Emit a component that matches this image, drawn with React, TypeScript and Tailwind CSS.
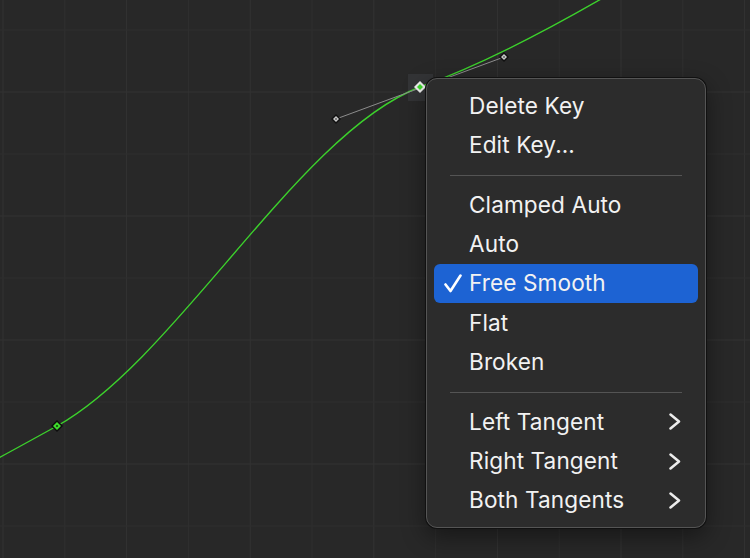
import React from 'react';

type Item =
  | { kind: 'item'; label: string; checked?: boolean; active?: boolean; submenu?: boolean }
  | { kind: 'sep' };

const MENU: Item[] = [
  { kind: 'item', label: 'Delete Key' },
  { kind: 'item', label: 'Edit Key...' },
  { kind: 'sep' },
  { kind: 'item', label: 'Clamped Auto' },
  { kind: 'item', label: 'Auto' },
  { kind: 'item', label: 'Free Smooth', checked: true, active: true },
  { kind: 'item', label: 'Flat' },
  { kind: 'item', label: 'Broken' },
  { kind: 'sep' },
  { kind: 'item', label: 'Left Tangent', submenu: true },
  { kind: 'item', label: 'Right Tangent', submenu: true },
  { kind: 'item', label: 'Both Tangents', submenu: true },
];

// grid lines for the curve canvas
const VLINES = Array.from({ length: 13 }, (_, i) => 3 + i * 61.8);
const HLINES = Array.from({ length: 9 }, (_, i) => 30 + i * 62);

function Diamond({ x, y, r, fill }: { x: number; y: number; r: number; fill: string }) {
  return <polygon points={`${x},${y - r} ${x + r},${y} ${x},${y + r} ${x - r},${y}`} fill={fill} />;
}

function CurveCanvas() {
  return (
    <svg className="absolute inset-0" width={750} height={558} viewBox="0 0 750 558">
      {VLINES.map((x, i) => (
        <line key={'v' + i} x1={x} y1={0} x2={x} y2={558} stroke={i % 2 === 0 ? '#333333' : '#2f2f2f'} strokeWidth={1} />
      ))}
      {HLINES.map((y, i) => (
        <line key={'h' + i} x1={0} y1={y} x2={750} y2={y} stroke={i % 2 === 1 ? '#333333' : '#2f2f2f'} strokeWidth={1} />
      ))}

      {/* selection square behind the active key */}
      <rect x={408} y={74} width={25} height={27} fill="#333436" />

      {/* curve */}
      <path
        d="M -20 468 C 10 452, 35 438, 57 426 C 178 358, 299 133, 420 87 C 470 69, 540 35, 620 -12"
        fill="none"
        stroke="#3cd12c"
        strokeWidth={1.4}
      />

      {/* tangent handles */}
      <line x1={336} y1={119} x2={504} y2={57} stroke="#8c8c8c" strokeWidth={1} />
      <Diamond x={336} y={119} r={5} fill="#111" />
      <Diamond x={336} y={119} r={3} fill="#c8c8c8" />
      <Diamond x={336} y={119} r={1} fill="#333" />
      <Diamond x={504} y={57} r={5} fill="#111" />
      <Diamond x={504} y={57} r={3} fill="#c8c8c8" />
      <Diamond x={504} y={57} r={1} fill="#333" />

      {/* keys */}
      <Diamond x={57} y={426} r={6} fill="#0c0c0c" />
      <Diamond x={57} y={426} r={4} fill="#3fdc2c" />
      <Diamond x={57} y={426} r={1.3} fill="#0b3a08" />

      <Diamond x={420} y={87} r={6} fill="#f2f2f2" />
      <Diamond x={420} y={87} r={3} fill="#3fdc2c" />
    </svg>
  );
}

function Chevron() {
  return (
    <svg width={12} height={17} viewBox="0 0 12 17" className="shrink-0">
      <polyline points="1.5,1.5 10,8.5 1.5,15.5" fill="none" stroke="#ececec" strokeWidth={2.5} strokeLinecap="round" strokeLinejoin="round" />
    </svg>
  );
}

function Check() {
  return (
    <svg width={18} height={19} viewBox="0 0 18 19">
      <polyline points="1.5,10.5 6.5,17 16.5,1.5" fill="none" stroke="#ffffff" strokeWidth={2.6} strokeLinecap="round" strokeLinejoin="round" />
    </svg>
  );
}

export default function App() {
  return (
    <div className="relative w-[750px] h-[558px] overflow-hidden bg-[#282828] font-['Inter',_'Liberation_Sans',_sans-serif]">
      <CurveCanvas />

      {/* context menu */}
      <div className="absolute left-[426px] top-[78px] w-[280px] h-[450px] rounded-[11px] border border-[#555555] bg-[#2c2c2c] pt-[7.5px] pb-[6px] shadow-[0_0_0_1px_#111,0_8px_24px_rgba(0,0,0,0.45)]">
        {MENU.map((it, i) =>
          it.kind === 'sep' ? (
            <div key={i} className="h-[20px] flex items-center px-[23px]">
              <div className="h-px w-full bg-[#545454]" />
            </div>
          ) : (
            <div
              key={i}
              className={`mx-[7px] h-[39.4px] rounded-[6px] flex items-center pr-[17px] text-[22.6px] tracking-[0.1px] text-[#f2f2f2] ${
                it.active ? 'bg-[#1d63d3]' : ''
              }`}
            >
              <span className="w-[35px] flex justify-center pl-[2px]">{it.checked ? <Check /> : null}</span>
              <span className="flex-1 leading-none">{it.label}</span>
              {it.submenu ? <Chevron /> : null}
            </div>
          )
        )}
      </div>
    </div>
  );
}
